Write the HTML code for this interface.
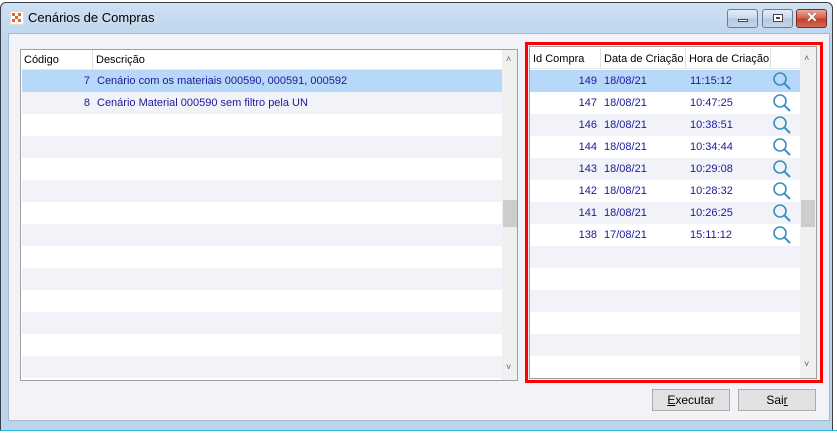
<!DOCTYPE html>
<html><head><meta charset="utf-8"><style>
*{box-sizing:border-box;margin:0;padding:0}
body{width:837px;height:433px;overflow:hidden;background:#fff;font-family:"Liberation Sans",sans-serif;font-size:11px;position:relative}
.abs{position:absolute}
#win{left:0;top:2px;width:833px;height:429px;border:1px solid #3a3f4a;border-radius:6px 6px 0 0;background:linear-gradient(#cfe0f2,#bcd4ec 40px);}
#client{left:8px;top:33px;width:822px;height:388px;background:#f2f3f8;border:1px solid #a9b9cc}
.title{left:28px;top:10px;font-size:13px;color:#000}
.tb{top:9px;height:19px;border:1px solid #6b7b90;border-radius:3px;background:linear-gradient(#e4edf7,#c9d8ea 50%,#b3c7df 51%,#c4d6ea)}
.grid{background:#fff;border:1px solid #a0a0a0;overflow:hidden}
.row{position:absolute;left:0;height:22px;line-height:22px;color:#1a1a9a;white-space:nowrap}
.g{background:#f2f3f8}.w{background:#fff}.sel{background:#b7d8f8}
.hdr{position:absolute;top:0;left:0;height:20px;line-height:20px;background:#fff;color:#000;border-bottom:1px solid #e8e8e8;white-space:nowrap}
.hdr span{position:absolute;top:0;height:20px;padding-left:3px;border-right:1px solid #e0e0e0;white-space:nowrap;overflow:hidden}
.sb{position:absolute;top:0;width:16px;background:#f0f0f0}
.th{position:absolute;left:1px;width:14px;height:27px;background:#cdcdcd}
.btn{top:389px;height:22px;border:1px solid #adadad;background:#e1e1e1;text-align:center;line-height:20px;color:#000;font-size:12px}
.mag{position:absolute;width:22px;height:20px}
</style></head><body>
<div id="win" class="abs"></div>
<div class="abs" style="left:0;top:430px;width:837px;height:1px;background:#2ab6d6"></div>
<div class="abs" style="left:10px;top:11px;width:14px;height:14px;background:#fff;border:1px solid #ddd"><svg width="12" height="12" viewBox="0 0 12 12"><g fill="#f0641e"><rect x="1" y="1" width="3" height="3"/><rect x="7" y="1" width="3" height="3"/><rect x="4" y="4" width="3" height="3"/><rect x="1" y="7" width="3" height="3"/><rect x="7" y="7" width="3" height="3"/></g></svg></div>
<div class="abs title">Cenários de Compras</div>
<div class="abs tb" style="left:727px;width:31px"><div class="abs" style="left:10px;top:9px;width:10px;height:3px;background:#fff;border:1px solid #445"></div></div>
<div class="abs tb" style="left:762px;width:31px"><div class="abs" style="left:10px;top:4px;width:10px;height:8px;border:1px solid #445;background:#fff;box-shadow:inset 0 0 0 2px #fff,inset 0 0 0 3px #445"></div></div>
<div class="abs tb" style="left:796px;width:31px;border-color:#7a2a20;background:linear-gradient(#e8a898,#d2604a 50%,#c0402a 51%,#d06a50)"><div class="abs" style="left:9px;top:-1px;color:#fff;font-weight:bold;font-size:14px;text-shadow:0 0 1px #333">✕</div></div>
<div id="client" class="abs"></div>

<div class="abs grid" style="left:20px;top:49px;width:498px;height:332px">
 <div class="hdr" style="width:481px"><span style="left:0;width:72px">Código</span><span style="left:72px;width:409px;border-right:none">Descrição</span></div>
 <div class="row sel" style="top:20px;width:481px;left:1px"><span class="abs" style="left:0;width:68px;text-align:right;color:#1a1a9a">7</span><span class="abs" style="left:75px">Cenário com os materiais 000590, 000591, 000592</span></div>
 <div class="row g" style="top:42px;width:481px;left:1px"><span class="abs" style="left:0;width:68px;text-align:right">8</span><span class="abs" style="left:75px">Cenário Material 000590 sem filtro pela UN</span></div>
 <div class="row w" style="top:64px;width:481px"></div>
 <div class="row g" style="top:86px;width:481px;left:1px"></div>
 <div class="row w" style="top:108px;width:481px"></div>
 <div class="row g" style="top:130px;width:481px;left:1px"></div>
 <div class="row w" style="top:152px;width:481px"></div>
 <div class="row g" style="top:174px;width:481px;left:1px"></div>
 <div class="row w" style="top:196px;width:481px"></div>
 <div class="row g" style="top:218px;width:481px;left:1px"></div>
 <div class="row w" style="top:240px;width:481px"></div>
 <div class="row g" style="top:262px;width:481px;left:1px"></div>
 <div class="row w" style="top:284px;width:481px"></div>
 <div class="row g" style="top:306px;width:481px;left:1px"></div>
 <div class="sb" style="left:481px;height:330px"><div class="abs" style="left:4px;top:4px;font-size:9px;color:#606060">˄</div><div class="th" style="top:150px"></div><div class="abs" style="left:4px;top:312px;font-size:9px;color:#606060">˅</div></div>
</div>

<div class="abs" style="left:525px;top:42px;width:298px;height:341px;border:3px solid #f00"></div>
<div class="abs grid" style="left:529px;top:46px;width:288px;height:333px;border-color:#a0a0a0">
 <div class="hdr" style="width:270px;top:2px"><span style="left:0;width:71px">Id Compra</span><span style="left:71px;width:85px">Data de Criação</span><span style="left:156px;width:85px">Hora de Criação</span></div>
 <div id="rr"></div>
 <div class="sb" style="left:270px;height:331px"><div class="abs" style="left:4px;top:6px;font-size:9px;color:#606060">˄</div><div class="th" style="top:153px"></div><div class="abs" style="left:4px;top:312px;font-size:9px;color:#606060">˅</div></div>
</div>
<script>
var d=[["149","18/08/21","11:15:12"],["147","18/08/21","10:47:25"],["146","18/08/21","10:38:51"],["144","18/08/21","10:34:44"],["143","18/08/21","10:29:08"],["142","18/08/21","10:28:32"],["141","18/08/21","10:26:25"],["138","17/08/21","15:11:12"]];
var h="";
for(var i=0;i<14;i++){var cls=i==0?"sel":(i%2?"w":"g");var t=23+i*22;h+='<div class="row '+cls+'" style="top:'+t+'px;width:270px">';
if(i<8){h+='<span class="abs" style="left:0;width:67px;text-align:right">'+d[i][0]+'</span><span class="abs" style="left:74px">'+d[i][1]+'</span><span class="abs" style="left:160px">'+d[i][2]+'</span><svg class="mag" style="left:241px;top:1px" viewBox="0 0 22 20"><circle cx="9" cy="8" r="6" fill="none" stroke="#3a8fc0" stroke-width="1.6"/><line x1="13.3" y1="12.3" x2="19" y2="18" stroke="#3a8fc0" stroke-width="2"/></svg>';}
h+='</div>';}
document.getElementById("rr").innerHTML=h;
</script>
<div class="abs btn" style="left:652px;width:78px"><u>E</u>xecutar</div>
<div class="abs btn" style="left:738px;width:78px">Sai<u>r</u></div>
</body></html>
